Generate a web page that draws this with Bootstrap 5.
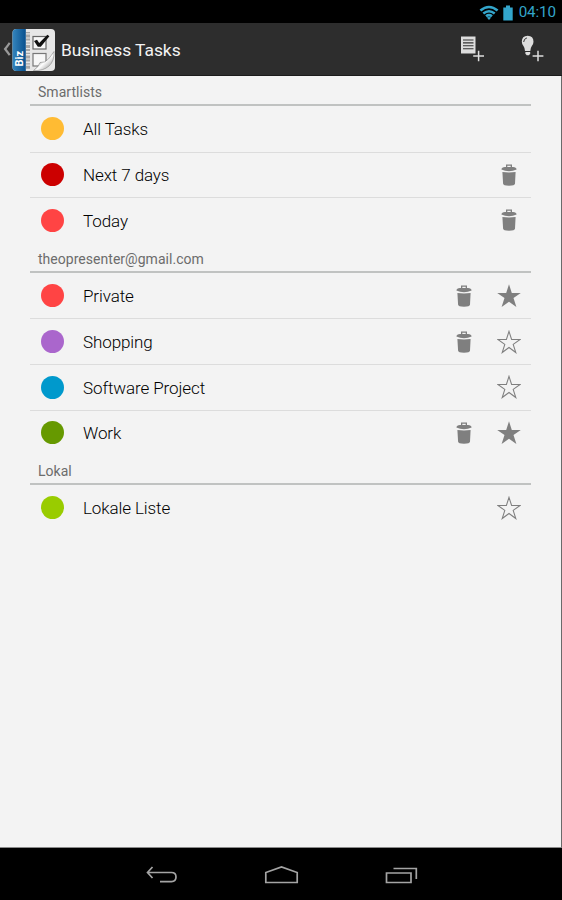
<!DOCTYPE html>
<html lang="en">
<head>
<meta charset="utf-8">
<meta name="viewport" content="width=device-width, initial-scale=1">
<title>Business Tasks</title>
<link href="https://cdn.jsdelivr.net/npm/bootstrap@5.3.0/dist/css/bootstrap.min.css" rel="stylesheet">
<style>
body{font-family:Roboto,"Noto Sans",sans-serif;background:#000;height:900px;overflow:hidden;line-height:1}
svg{display:block;flex:none}
.status-bar{height:23px;color:#33a5cb;font-size:15.2px;padding-right:6px;padding-top:2px}
.clock{margin-left:6px;letter-spacing:-.1px}
.app-bar{height:53px;background:#2d2d2d;border-bottom:1px solid #1b1b1b;color:#f3f3f3;padding-left:3px;padding-right:17px}
.app-title{font-size:17.4px;margin-left:5px;padding-top:4px;letter-spacing:-.03px}
.app-actions{gap:34px}
.app-logo text{font:700 11px Roboto,sans-serif;fill:#fff}
.content-pane{background:#f3f3f3;border-right:1px solid #6a6a6a;border-bottom:1px solid #8a8a8a;padding:0 30px}
.section-title{height:30px;border-bottom:2px solid #c0c2c1;color:#6c6c6c;font-size:14px;padding:8px 8px 0;letter-spacing:.03px}
.task-row{height:45.6px;padding:0 10px 0 11px;color:#000;font-size:17px;font-weight:300}
.task-row + .task-row{border-top:1px solid #dcdcdc}
.task-name{margin-left:19px;padding-top:2px;letter-spacing:-.1px}
.dot{width:23px;height:23px}
.amber{background:#ffbb33}.crimson{background:#cc0000}.coral{background:#ff4444}.violet{background:#aa66cc}
.azure{background:#0099cc}.olive{background:#669900}.lime{background:#99cc00}
.row-icons{gap:23px;color:#7f7f7f}
.bin-end{margin-right:2px}
.nav-keys{height:52px;padding-left:146px;padding-top:4px;gap:85.500px}
.nav-keys svg{fill:none;stroke:#a4a4a4;stroke-width:1.7}
</style>
<script src="https://cdn.jsdelivr.net/npm/bootstrap@5.3.0/dist/js/bootstrap.bundle.min.js"></script>
</head>
<body class="d-flex flex-column m-0">
<svg width="0" height="0" class="position-absolute" aria-hidden="true">
  <symbol id="bin" viewBox="0 0 20 24">
    <path d="M7 5V1.400h6V5h-1.300V2.800H8.300V5z" fill="currentColor"/>
    <path d="M2.400 6.600Q2.600 4.500 6 4.100h8q3.400.4 3.600 2.500Q14 8.200 10 8.200T2.400 6.600z" fill="currentColor"/>
    <path d="M3.400 9.100Q10 10 16.600 9.100L16 20.800Q15.800 22.700 10 22.700T4.100 20.800z" fill="currentColor"/>
  </symbol>
  <symbol id="star" viewBox="0 0 24 24">
    <path d="M12 .3l2.800 8.600h9.000l-7.300 5.200 2.900 9L12 17.700l-7.400 5.400 2.900-9L.2 8.900h9.000z" fill="currentColor"/>
  </symbol>
  <symbol id="star-line" viewBox="0 0 24 24">
    <path d="M12 1.300l2.600 8.100h8.500l-6.900 5 2.600 8.100L12 17.500l-6.800 5 2.600-8.100-6.900-5h8.500z" fill="none" stroke="currentColor" stroke-width="1.050"/>
  </symbol>
</svg>

<div class="status-bar d-flex justify-content-end align-items-center">
  <svg width="20" height="16" viewBox="0 0 20 16" fill="none" stroke="#33a5cb" stroke-width="2.600">
    <path d="M1.400 5.500Q10-1.500 18.600 5.500" /><path d="M4.300 8.500Q10 4 15.700 8.500"/><path d="M7 11.300Q10 9 13 11.300"/><path d="M10 15L7.800 12.500Q10 11.300 12.200 12.500z" fill="#33a5cb" stroke="none"/>
  </svg>
  <svg class="ms-1" width="10" height="16" viewBox="0 0 10 16" fill="#33a5cb"><path d="M3 .5h4v2h2.700v13H.3v-13H3z"/></svg>
  <span class="clock">04:10</span>
</div>

<header class="app-bar d-flex align-items-center">
  <svg width="9" height="16" viewBox="0 0 9 16" fill="none" stroke="#999" stroke-width="2.200"><path d="M6.700 1.800Q4.500 5 2.100 8q2.400 3 4.600 6.200"/></svg>
  <svg class="app-logo mt-1" width="44" height="44" viewBox="0 0 44 44">
    <defs>
      <linearGradient id="spine"><stop offset="0" stop-color="#3585bd"/><stop offset="1" stop-color="#08508e"/></linearGradient>
      <linearGradient id="curl" x1="0" y1="0" x2="1" y2="1"><stop offset=".35" stop-color="#8b8b8b"/><stop offset=".55" stop-color="#fff"/><stop offset=".8" stop-color="#b5b5b5"/></linearGradient>
    </defs>
    <rect x=".5" y="0" width="42.500" height="42" rx="4" fill="#e6e6e6"/>
    <path d="M4.500 0h9.300v42H4.500Q.5 42 .5 38V4q0-4 4-4z" fill="url(#spine)"/>
    <path d="M16 3v37" stroke="#333" stroke-width="3" stroke-dasharray="1.200 1.400 3 1 2 1.800" opacity=".7"/>
    <path d="M16 3v37" stroke="#e6e6e6" stroke-width="1"/>
    <rect x="21" y="7.500" width="13" height="12.500" fill="#f7f7f7" stroke="#666" stroke-width="1.200"/>
    <rect x="21" y="24.500" width="13" height="12.500" fill="#f7f7f7" stroke="#777" stroke-width="1.200"/>
    <path d="M22 12l3-1.200 2.200 3.200 8.200-8.200 2 1.500-8.600 10.400h-3z" fill="#111"/>
    <path d="M21.500 41.500Q26.500 38 28 33.500q5 .5 8.500-3.500 2.500-3 5.500-7.500Q42.500 32 37 37t-15.500 4.500z" fill="url(#curl)" stroke="#777" stroke-width=".5"/>
    <text transform="translate(11.200 37.500) rotate(-90)">Biz</text>
  </svg>
  <span class="app-title">Business Tasks</span>
  <div class="app-actions d-flex ms-auto">
    <svg width="26" height="28" viewBox="0 0 26 28">
      <path d="M2 1.500h14.500v17H2z" fill="#ddd"/>
      <path d="M4 5h10.500M4 7.900h10.500M4 10.800h10.500M4 13.700h10.500" stroke="#333" stroke-width="1.100"/>
      <path d="M19.600 15.300v11M14 20.800h11" stroke="#2d2d2d" stroke-width="3.500"/>
      <path d="M19.600 15.800v10.500M14.200 20.900h10.800" stroke="#ddd" stroke-width="1.500"/>
    </svg>
    <svg width="26" height="28" viewBox="0 0 26 28">
      <path d="M8.700.8q5.800 0 5.800 6 0 2.300-1.800 4.500-1.400 2-1.400 4.700H6q0-2.700-1.400-4.700Q2.800 9.100 2.800 6.800q0-6 5.900-6z" fill="#ddd"/>
      <path d="M4.700 7q0-3.200 3.200-4.100" stroke="#333" stroke-width="1" fill="none"/>
      <path d="M6.400 17h4.800v1.700l-1.300 1.600H7.700l-1.300-1.600z" fill="#ddd"/>
      <path d="M19 15.800v10.500M13.600 20.900h10.800" stroke="#ddd" stroke-width="1.500"/>
    </svg>
  </div>
</header>

<main class="content-pane flex-grow-1">
  <h2 class="section-title m-0 fw-normal">Smartlists</h2>
  <div class="task-row d-flex align-items-center"><span class="dot rounded-circle amber"></span><span class="task-name">All Tasks</span></div>
  <div class="task-row d-flex align-items-center"><span class="dot rounded-circle crimson"></span><span class="task-name">Next 7 days</span>
    <div class="row-icons d-flex ms-auto"><svg class="bin-end" width="20" height="24"><use href="#bin"/></svg></div></div>
  <div class="task-row d-flex align-items-center"><span class="dot rounded-circle coral"></span><span class="task-name">Today</span>
    <div class="row-icons d-flex ms-auto"><svg class="bin-end" width="20" height="24"><use href="#bin"/></svg></div></div>

  <h2 class="section-title m-0 fw-normal">theopresenter@gmail.com</h2>
  <div class="task-row d-flex align-items-center"><span class="dot rounded-circle coral"></span><span class="task-name">Private</span>
    <div class="row-icons d-flex ms-auto"><svg width="20" height="24"><use href="#bin"/></svg><svg width="24" height="24"><use href="#star"/></svg></div></div>
  <div class="task-row d-flex align-items-center"><span class="dot rounded-circle violet"></span><span class="task-name">Shopping</span>
    <div class="row-icons d-flex ms-auto"><svg width="20" height="24"><use href="#bin"/></svg><svg width="24" height="24"><use href="#star-line"/></svg></div></div>
  <div class="task-row d-flex align-items-center"><span class="dot rounded-circle azure"></span><span class="task-name">Software Project</span>
    <div class="row-icons d-flex ms-auto"><svg width="24" height="24"><use href="#star-line"/></svg></div></div>
  <div class="task-row d-flex align-items-center"><span class="dot rounded-circle olive"></span><span class="task-name">Work</span>
    <div class="row-icons d-flex ms-auto"><svg width="20" height="24"><use href="#bin"/></svg><svg width="24" height="24"><use href="#star"/></svg></div></div>

  <h2 class="section-title m-0 fw-normal">Lokal</h2>
  <div class="task-row d-flex align-items-center"><span class="dot rounded-circle lime"></span><span class="task-name">Lokale Liste</span>
    <div class="row-icons d-flex ms-auto"><svg width="24" height="24"><use href="#star-line"/></svg></div></div>
</main>

<nav class="nav-keys d-flex align-items-center">
  <svg width="32" height="20" viewBox="0 0 32 20"><path d="M6.500 1L1.500 6.500l5 5.500M1.500 6.500H25.500Q30 6.500 30 11t-4.500 4.700H14"/></svg>
  <svg width="36" height="20" viewBox="0 0 36 20"><path d="M1.800 16.500V6.500L17.500.9l15.700 5.600v10z"/></svg>
  <svg width="34" height="20" viewBox="0 0 34 20"><path d="M1.500 7h24.500v9.500H1.500zM8.500 2.500h22.800v10.500"/></svg>
</nav>
</body>
</html>
